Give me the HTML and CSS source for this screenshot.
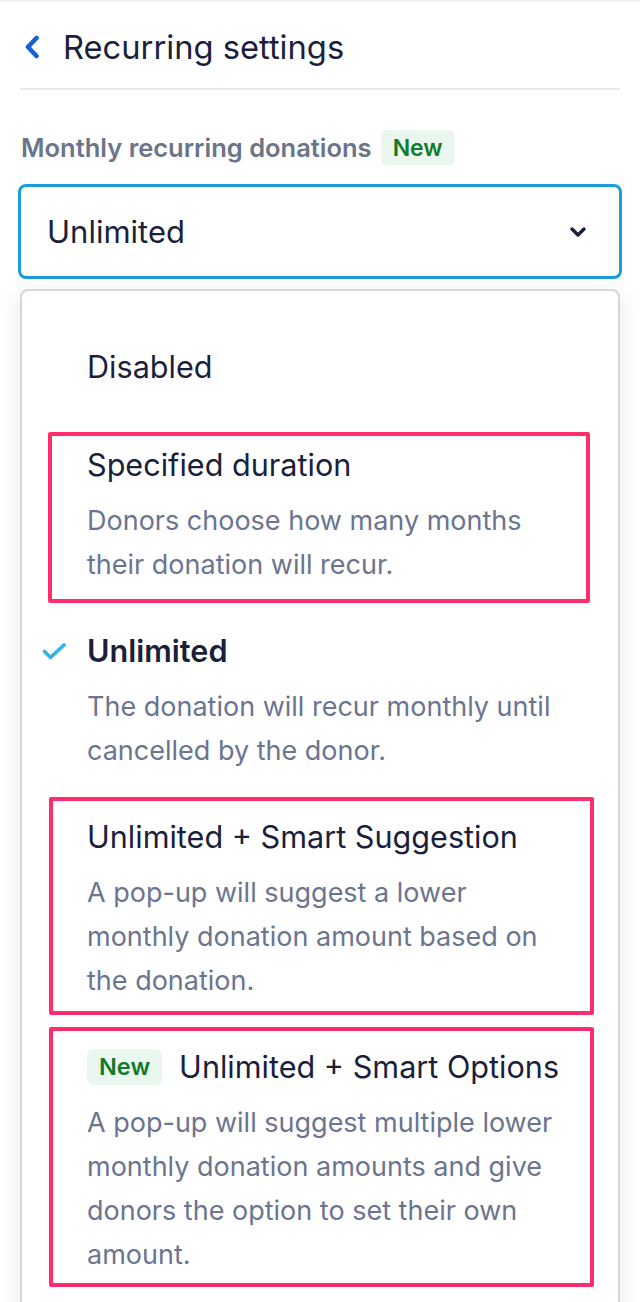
FILE: index.html
```html
<!DOCTYPE html>
<html lang="en">
<head>
<meta charset="utf-8">
<title>Recurring settings</title>
<link rel="stylesheet" href="styles.css">
</head>
<body>
<div class="page">
  <header class="header">
    <svg class="back" width="16" height="24" viewBox="0 0 16 24" aria-hidden="true">
      <polyline points="12.5,3 4,12 12.5,21" fill="none" stroke="#1560d4" stroke-width="4.6" stroke-linecap="round" stroke-linejoin="round"/>
    </svg>
    <h1 class="title">Recurring settings</h1>
  </header>

  <section class="field">
    <div class="label-row">
      <span class="label">Monthly recurring donations</span>
      <span class="badge">New</span>
    </div>
    <div class="select">
      <span class="select-value">Unlimited</span>
      <svg class="caret" width="18" height="12" viewBox="0 0 18 12" aria-hidden="true">
        <polyline points="3,3 9,9 15,3" fill="none" stroke="#1b1f3b" stroke-width="3.4" stroke-linecap="round" stroke-linejoin="round"/>
      </svg>
    </div>

    <div class="panel">
      <div class="opt opt-disabled">
        <div class="opt-title">Disabled</div>
      </div>

      <div class="opt opt-marked opt-specified">
        <div class="opt-title">Specified duration</div>
        <p class="opt-desc">Donors choose how many months their donation will recur.</p>
      </div>

      <div class="opt opt-selected">
        <svg class="check" width="26" height="20" viewBox="0 0 26 20" aria-hidden="true">
          <polyline points="2.5,9.5 8.5,15.5 22,3" fill="none" stroke="#2bb5e6" stroke-width="3.6" stroke-linecap="round" stroke-linejoin="round"/>
        </svg>
        <div class="opt-body">
          <div class="opt-title strong">Unlimited</div>
          <p class="opt-desc">The donation will recur monthly until cancelled by the donor.</p>
        </div>
      </div>

      <div class="opt opt-marked opt-suggestion">
        <div class="opt-title">Unlimited + Smart Suggestion</div>
        <p class="opt-desc">A pop-up will suggest a lower monthly donation amount based on the donation.</p>
      </div>

      <div class="opt opt-marked opt-options">
        <div class="opt-title"><span class="badge badge-inline">New</span>Unlimited + Smart Options</div>
        <p class="opt-desc">A pop-up will suggest multiple lower monthly donation amounts and give donors the option to set their own amount.</p>
      </div>
    </div>
  </section>
</div>
</body>
</html>
```

FILE: styles.css
```css
* { box-sizing: border-box; }

html, body {
  margin: 0;
  padding: 0;
  background: #ffffff;
}

body {
  font-family: Inter, "Noto Sans", "Liberation Sans", sans-serif;
  color: #1b1f3b;
  overflow: hidden;
}

.page {
  border-top: 2px solid #f1f2f4;
}

/* Header */
.header {
  display: flex;
  align-items: center;
  margin: 0 20px;
  padding: 25px 0 21px 4px;
  border-bottom: 2px solid #e7e9ee;
}

.back {
  flex: none;
  margin-right: 23px;
}

.title {
  margin: 0;
  font-size: 32.7px;
  line-height: 40px;
  font-weight: 400;
  color: #1b1f3b;
}

/* Field */
.field {
  padding: 0 18px;
}

.label-row {
  display: flex;
  align-items: center;
  height: 35px;
  margin-top: 40px;
  padding-left: 3px;
}

.label {
  font-size: 25.5px;
  font-weight: 600;
  color: #6b7589;
}

.badge {
  display: inline-flex;
  align-items: center;
  height: 35px;
  padding: 0 12px;
  margin-left: 9px;
  border-radius: 6px;
  background: #eaf7ee;
  color: #137a2b;
  font-size: 23px;
  font-weight: 600;
}

.select {
  display: flex;
  align-items: center;
  justify-content: space-between;
  height: 95px;
  margin-top: 19px;
  padding: 0 32px 0 26px;
  border: 3px solid #1a9edb;
  border-radius: 8px;
}

.select-value {
  font-size: 31px;
  color: #1b1f3b;
}

.panel {
  margin: 10px 2px 0;
  padding-bottom: 60px;
  border: 2px solid #d2d7e2;
  border-radius: 8px;
  background: #ffffff;
  box-shadow: 0 4px 22px rgba(40, 50, 80, 0.1);
}

/* Options */
.opt {
  border: 4px solid transparent;
  margin: 0 28px 0 26px;
  padding-left: 35px;
}

.opt-marked {
  border-color: #ff2d6b;
  border-radius: 2px;
}

.opt-title {
  display: flex;
  align-items: center;
  font-size: 30.6px;
  line-height: 36px;
  color: #1b1f3b;
}

.opt-title.strong {
  font-weight: 600;
}

.opt-desc {
  max-width: 480px;
  margin: 16px 0 0;
  font-size: 27px;
  line-height: 44px;
  color: #6b7590;
}

.opt-disabled {
  padding-top: 54px;
  padding-bottom: 43px;
}

.opt-specified {
  padding-top: 11px;
  padding-bottom: 12px;
}

.opt-selected {
  display: flex;
  align-items: flex-start;
  margin-left: 16px;
  padding-left: 0;
  padding-top: 26px;
  padding-bottom: 20px;
}

.check {
  flex: none;
  margin-top: 9px;
  margin-right: 19px;
}

.opt-body {
  flex: 1;
}

.opt-suggestion {
  margin-left: 27px;
  margin-right: 24px;
  padding-left: 34px;
  padding-top: 18px;
  padding-bottom: 8px;
  margin-bottom: 12px;
}

.opt-options {
  margin-left: 27px;
  margin-right: 24px;
  padding-left: 34px;
  padding-top: 18px;
  padding-bottom: 6px;
}

.badge-inline {
  margin-left: 0;
  margin-right: 17px;
  height: 36px;
  padding: 0 12px;
  font-size: 23.5px;
}
```
